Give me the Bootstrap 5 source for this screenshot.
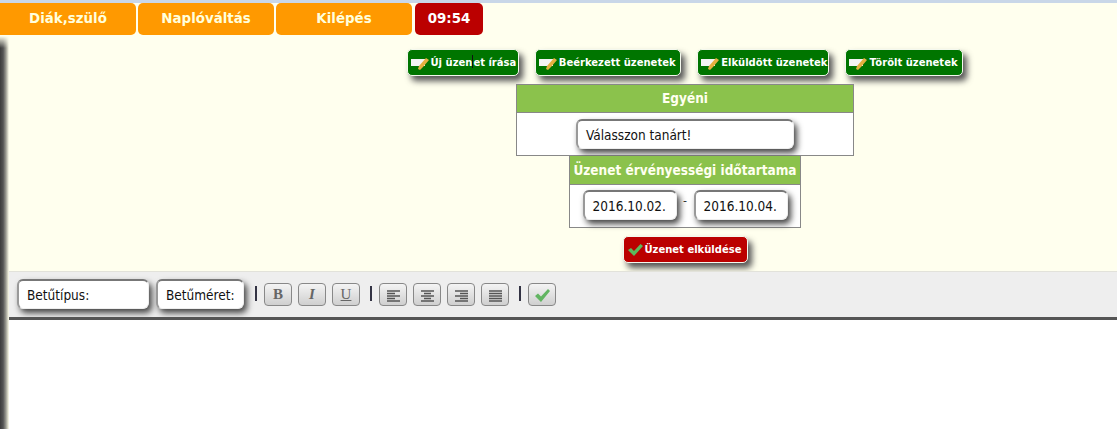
<!DOCTYPE html>
<html lang="hu">
<head>
    <meta charset="UTF-8">
    <meta name="viewport" content="width=device-width, initial-scale=1.0">
    <title>Üzenetek</title>
    <link href="https://cdn.jsdelivr.net/npm/bootstrap@5.3.0/dist/css/bootstrap.min.css" rel="stylesheet">
    <style>
        html, body { height: 429px; overflow: hidden; }
        body {
            background: #ffffee;
            font-family: "DejaVu Sans", sans-serif;
            border-top: 3px solid #c9d7e8;
        }

        /* top menu */
        .top-menu { height: 33px; gap: 2px; }
        .top-item {
            background: #ff9900;
            color: #ffffdd;
            font-size: 13.4px;
            font-weight: 700;
            border-radius: 0 5px 5px 0;
            height: 32px;
            line-height: 31px;
            text-align: center;
            width: 136px;
        }
        .top-item + .top-item { border-radius: 5px; }
        .top-clock { background: #bb0000; width: 68px; color: #fff; margin-left: 1px; }

        /* page body */
        .page-row { height: 393px; }
        .side-shadow {
            width: 9px;
            flex: none;
            background:
                linear-gradient(#ffffee, rgba(255, 255, 238, 0) 12px),
                linear-gradient(to right, #3c3c3c 0, #555 35%, #999990 65%, #dcdccc 88%, #ffffee 100%);
        }
        .page-main { min-width: 0; }
        .msg-area { height: 235px; padding: 13px 0 0 244px; }

        .msg-btn {
            background: #007500;
            color: #fff;
            font-size: 10px;
            font-weight: 700;
            height: 27px;
            border: 1px solid #f4f8ee;
            border-radius: 5px;
            box-shadow: 4px 5px 6px #555;
            white-space: nowrap;
            padding: 0 0 0 3px;
            gap: 2px;
        }
        .msg-btn svg { flex: none; }
        .msg-tabs { width: 557px; height: 35px; }
        .tab-new { width: 112px; }
        .tab-in { width: 146px; }
        .tab-out { width: 132px; }
        .tab-del { width: 118px; }
        .msg-send { background: #bb0000; width: 125px; margin-top: 8px; padding-left: 4px; }
        .type-caret { display: inline-block; width: 0; height: 13px; border-left: 1px solid #111; vertical-align: -2px; }

        .box-panel {
            background: #fff;
            border: 1px solid #888;
        }
        .box-head {
            background: #8bc24c;
            color: #fffff0;
            font-family: "DejaVu Sans Condensed", "DejaVu Sans", sans-serif;
            font-size: 13.5px;
            font-weight: 700;
            text-align: center;
            white-space: nowrap;
            border-bottom: 1px solid #888;
        }
        .box-one { width: 338px; height: 72px; }
        .box-one .box-head { height: 28px; line-height: 27px; }
        .box-two { width: 232px; height: 72px; border-top: 0; }
        .box-two .box-head { height: 29px; line-height: 28px; }

        .shadow-field {
            background: #fff;
            color: #111;
            font-family: "DejaVu Sans Condensed", "DejaVu Sans", sans-serif;
            font-size: 13.5px;
            height: 30px;
            line-height: 28px;
            border: 1px solid #eee;
            border-top: 2px solid #777;
            border-left: 2px solid #999;
            border-radius: 6px;
            box-shadow: 3px 4px 6px #444;
            padding-left: 8px;
            white-space: nowrap;
        }
        .teacher-field { width: 218px; margin: 6px 0 0 59px; }
        .date-row { padding-top: 5px; }
        .date-field { width: 94px; }
        .date-sep { font-size: 11px; width: 17px; text-align: center; line-height: 22px; color: #222; }

        /* editor */
        .editor-bar {
            background: #eeeeee;
            height: 46px;
            padding: 7px 0 0 8px;
            border-top: 1px solid #e2e2da;
        }
        .font-field { width: 132px; margin-right: 7px; }
        .size-field { width: 88px; margin-right: 11px; }
        .bar-sep { width: 2px; height: 15px; background: #334; margin: 7px 7px 0 0; align-self: flex-start; }
        .tool-btn {
            width: 28px;
            height: 23px;
            margin-right: 6px;
            margin-top: 4px;
            border: 1px solid #888;
            border-radius: 4px;
            background: linear-gradient(#f4f4f4, #cfcfcf);
            color: #666;
            font-family: "Liberation Serif", serif;
            font-size: 15px;
            line-height: 20px;
            text-align: center;
        }
        .tool-gap { margin-right: 10px; }
        .editor-area { border-top: 3px solid #555; background: #fff; flex: 1; }
    </style>
</head>
<body>
    <div class="d-flex top-menu">
        <div class="top-item">Diák,szülő</div>
        <div class="top-item">Naplóváltás</div>
        <div class="top-item">Kilépés</div>
        <div class="top-item top-clock">09:54</div>
    </div>

    <div class="d-flex page-row">
        <div class="side-shadow"></div>
        <div class="page-main flex-grow-1 d-flex flex-column">
            <div class="msg-area d-flex flex-column align-items-center">
                <div class="msg-tabs d-flex justify-content-between">
                    <div class="msg-btn tab-new d-flex align-items-center"><svg width="18" height="14" viewBox="0 0 18 14"><rect x="0" y="3" width="14" height="7" fill="#f4f4f4"/><path d="M15 2 l3 2 -6 7 -3 3 -2 -1 1 -3z" fill="#e6b040"/></svg><span>Új üzen<span class="type-caret"></span>et írása</span></div>
                    <div class="msg-btn tab-in d-flex align-items-center"><svg width="18" height="14" viewBox="0 0 18 14"><rect x="0" y="3" width="14" height="7" fill="#f4f4f4"/><path d="M15 2 l3 2 -6 7 -3 3 -2 -1 1 -3z" fill="#e6b040"/></svg>Beérkezett üzenetek</div>
                    <div class="msg-btn tab-out d-flex align-items-center"><svg width="18" height="14" viewBox="0 0 18 14"><rect x="0" y="3" width="14" height="7" fill="#f4f4f4"/><path d="M15 2 l3 2 -6 7 -3 3 -2 -1 1 -3z" fill="#e6b040"/></svg>Elküldött üzenetek</div>
                    <div class="msg-btn tab-del d-flex align-items-center"><svg width="18" height="14" viewBox="0 0 18 14"><rect x="0" y="3" width="14" height="7" fill="#f4f4f4"/><path d="M15 2 l3 2 -6 7 -3 3 -2 -1 1 -3z" fill="#e6b040"/></svg>Törölt üzenetek</div>
                </div>

                <div class="box-panel box-one">
                    <div class="box-head">Egyéni</div>
                    <div class="shadow-field teacher-field">Válasszon tanárt!</div>
                </div>

                <div class="box-panel box-two">
                    <div class="box-head">Üzenet érvényességi időtartama</div>
                    <div class="date-row d-flex justify-content-center">
                        <div class="shadow-field date-field">2016.10.02.</div>
                        <div class="date-sep">-</div>
                        <div class="shadow-field date-field">2016.10.04.</div>
                    </div>
                </div>

                <div class="msg-btn msg-send d-flex align-items-center"><svg width="15" height="13" viewBox="0 0 15 13"><path d="M0 7 l3 -2 3 3 6.500 -7 2.500 2 -9 10z" fill="#5cb85c"/></svg>Üzenet elküldése</div>
            </div>

            <div class="editor-bar d-flex">
                <div class="shadow-field font-field">Betűtípus:</div>
                <div class="shadow-field size-field">Betűméret:</div>
                <div class="bar-sep"></div>
                <div class="tool-btn fw-bold">B</div>
                <div class="tool-btn fst-italic fw-bold">I</div>
                <div class="tool-btn text-decoration-underline tool-gap">U</div>
                <div class="bar-sep"></div>
                <div class="tool-btn"><svg width="15" height="13" viewBox="0 0 15 13" stroke="#555" stroke-width="1.500"><path d="M1 2h13M1 4.500h8M1 7h13M1 9.500h8M1 12h13"/></svg></div>
                <div class="tool-btn"><svg width="15" height="13" viewBox="0 0 15 13" stroke="#555" stroke-width="1.500"><path d="M1 2h13M4 4.500h7M1 7h13M4 9.500h7M1 12h13"/></svg></div>
                <div class="tool-btn"><svg width="15" height="13" viewBox="0 0 15 13" stroke="#555" stroke-width="1.500"><path d="M1 2h13M6 4.500h8M1 7h13M6 9.500h8M1 12h13"/></svg></div>
                <div class="tool-btn tool-gap"><svg width="15" height="13" viewBox="0 0 15 13" stroke="#555" stroke-width="1.500"><path d="M1 2h13M1 4.500h13M1 7h13M1 9.500h13M1 12h13"/></svg></div>
                <div class="bar-sep"></div>
                <div class="tool-btn"><svg width="18" height="15" viewBox="0 0 18 15"><path d="M2 8 l3 -2.500 3 3 7 -7.500 2 2 -9 11z" fill="#62b562"/></svg></div>
            </div>
            <div class="editor-area"></div>
        </div>
    </div>

    <script src="https://cdn.jsdelivr.net/npm/bootstrap@5.3.0/dist/js/bootstrap.bundle.min.js"></script>
</body>
</html>
